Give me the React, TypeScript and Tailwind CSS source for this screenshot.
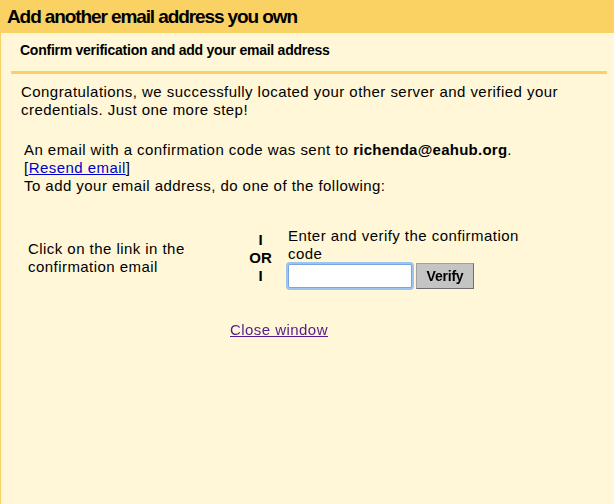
export default function App() {
  return (
    <div className="w-[614px] h-[504px] overflow-hidden bg-[#fff7d7] border-l border-[#fad163] font-['Liberation_Sans',Arial,sans-serif] text-black">
      <div className="h-[33px] bg-[#fad163] pl-[6px] text-[19px] tracking-[-1.1px] font-bold leading-[33px]">
        Add another email address you own
      </div>
      <div className="pl-[10px] pr-[7px]">
        <div className="pl-[9px] pt-[7px] pb-[11px] text-[14px] tracking-[-0.25px] font-bold leading-[20px] border-b-[3px] border-[#fad163]">
          Confirm verification and add your email address
        </div>
        <div className="pl-[10px] pt-[9px] text-[15px] tracking-[0.45px] leading-[18px] pr-[40px]">
          Congratulations, we successfully located your other server and verified your credentials. Just one more step!
        </div>
        <div className="pl-[13px] pt-[22px] text-[15px] tracking-[0.45px] leading-[18px]">
          <div>
            An email with a confirmation code was sent to <b className="tracking-[0.25px]">richenda@eahub.org</b>.
          </div>
          <div>
            [<a href="#" className="text-[#0000cc] underline">Resend email</a>]
          </div>
          <div>To add your email address, do one of the following:</div>
        </div>
        <div className="flex items-center pt-[32px] text-[15px] tracking-[0.45px] leading-[18px]">
          <div className="w-[222px] pl-[17px]">Click on the link in the confirmation email</div>
          <div className="w-[55px] flex flex-col items-center font-bold tracking-[0px]">
            <span>I</span>
            <span>OR</span>
            <span>I</span>
          </div>
          <div className="w-[250px]">
            <div>Enter and verify the confirmation code</div>
            <div className="flex items-center gap-[4px]">
              <input
                autoFocus
                className="w-[124px] h-[24px] bg-white border border-[#7aa6e0] rounded-[2px] shadow-[0_0_0_2px_#9cc3f4] outline-none px-[2px] text-[14px]"
              />
              <button className="h-[26px] w-[58px] bg-[#c4c4c4] border border-[#a0a0a0] border-r-[#6e6e6e] border-b-[#6e6e6e] text-[14px] tracking-[-0.2px] font-bold">
                Verify
              </button>
            </div>
          </div>
        </div>
        <div className="pt-[32px] pl-[219px] text-[15px] tracking-[0.45px] leading-[18px]">
          <a href="#" className="text-[#551a8b] underline">Close window</a>
        </div>
      </div>
    </div>
  );
}
